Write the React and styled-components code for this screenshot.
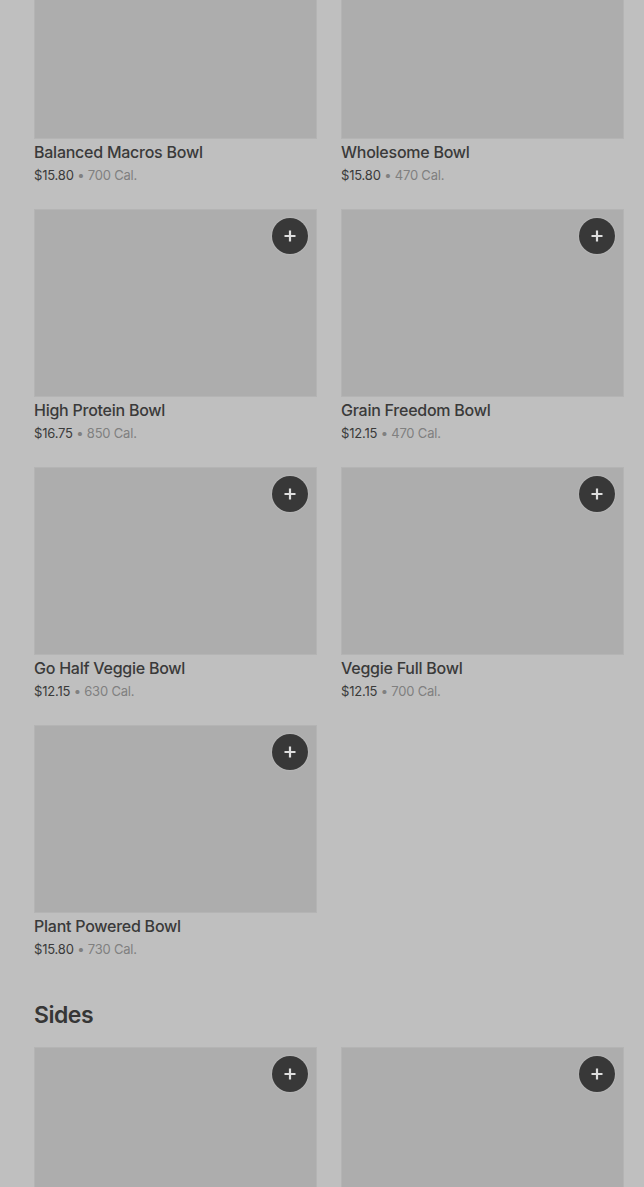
import React from "react";
import styled, { createGlobalStyle } from "styled-components";

const Global = createGlobalStyle`
  html, body { margin: 0; padding: 0; background: #bfbfbf; }
  body { font-family: Inter, "Liberation Sans", sans-serif; overflow: hidden; }
`;

const Page = styled.div`
  padding: 0 20px 0 34px;
  margin-top: -49px;
  display: flex;
  flex-direction: column;
`;

const Grid = styled.div`
  display: grid;
  grid-template-columns: 283px 283px;
  column-gap: 24px;
  row-gap: 23px;
`;

const Card = styled.div`
  display: flex;
  flex-direction: column;
`;

const Thumb = styled.div`
  position: relative;
  height: 188px;
  background: #adadad;
  box-shadow: inset 0 0 0 1px #b4b4b4;
`;

const AddButton = styled.button`
  position: absolute;
  top: 9px;
  right: 9px;
  width: 36px;
  height: 36px;
  border-radius: 50%;
  border: none;
  padding: 0;
  background: #383838;
  box-shadow: 0 0 2px rgba(255, 255, 255, 0.35);
  display: flex;
  align-items: center;
  justify-content: center;
`;

const Title = styled.div`
  margin-top: 2px;
  font-size: 16px;
  line-height: 22px;
  font-weight: 500;
  letter-spacing: -0.25px;
  color: #3a3a3a;
`;

const Meta = styled.div`
  margin-top: 1px;
  font-size: 13px;
  line-height: 22px;
  letter-spacing: -0.2px;
  color: #3a3a3a;
`;

const Cal = styled.span`
  color: #808080;
`;

const Heading = styled.h2`
  margin: 40px 0 17px;
  font-size: 23px;
  line-height: 30px;
  font-weight: 600;
  color: #363636;
  letter-spacing: -0.5px;
`;

const PlusIcon = () => (
  <svg width="14" height="14" viewBox="0 0 14 14">
    <path d="M7 1.5v11M1.5 7h11" stroke="#dedede" strokeWidth="2.2" strokeLinecap="butt" />
  </svg>
);

const bowls = [
  ["Balanced Macros Bowl", "$15.80", "700"],
  ["Wholesome Bowl", "$15.80", "470"],
  ["High Protein Bowl", "$16.75", "850"],
  ["Grain Freedom Bowl", "$12.15", "470"],
  ["Go Half Veggie Bowl", "$12.15", "630"],
  ["Veggie Full Bowl", "$12.15", "700"],
  ["Plant Powered Bowl", "$15.80", "730"],
];

const Item = ({ name, price, cal }) => (
  <Card>
    <Thumb>
      <AddButton aria-label="Add">
        <PlusIcon />
      </AddButton>
    </Thumb>
    {name && (
      <>
        <Title>{name}</Title>
        <Meta>
          {price} <Cal>• {cal} Cal.</Cal>
        </Meta>
      </>
    )}
  </Card>
);

export default function App() {
  return (
    <>
      <Global />
      <Page>
        <Grid>
          {bowls.map(([n, p, c]) => (
            <Item key={n} name={n} price={p} cal={c} />
          ))}
        </Grid>
        <Heading>Sides</Heading>
        <Grid>
          <Item />
          <Item />
        </Grid>
      </Page>
    </>
  );
}
